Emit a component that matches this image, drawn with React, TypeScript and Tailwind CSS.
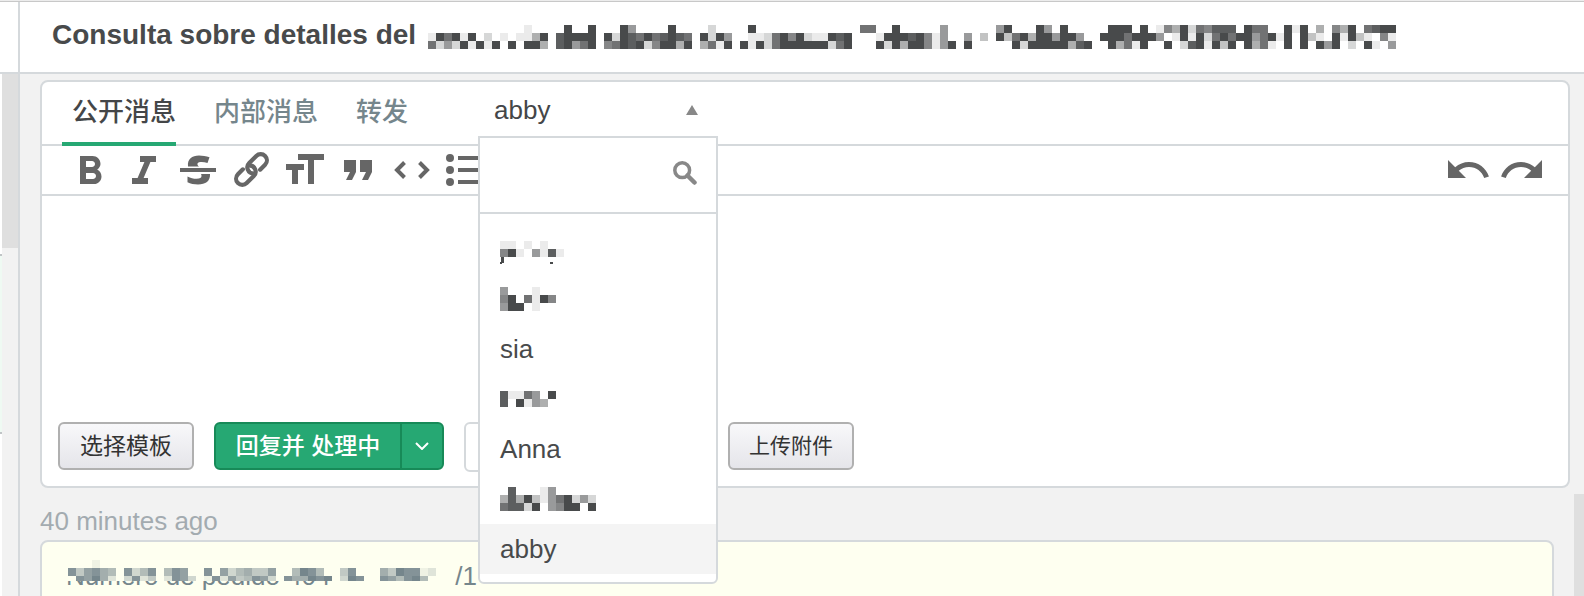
import { useState } from "react"
import type { ReactNode } from "react"
import clsx from "clsx"

// Each digit is the strength of one 8px cell, a dot is an empty cell
const TITLE_MASK = [
  "............1...|.9..9.|..95....9...|.2....|9.............77|..9|.....5......|59...95.9....|.999.9.1|649276888.977.|.919.4.649.7899",
  "197919.2.1.1149.|89999.|92987978987.|9295..|1127969211989...|199|989615..5.3.|93794995995..|99979995|.1919279799579|19.931.91931.61",
  "725291919.9.994.|89579.|67989269949.|4719.9|1927999999279...|929|4996159.9...|..9299999489.|.94719..|9.2891939.9471|.9.9.959.2.91.5",
].map((row) => row.replaceAll("|", ""))

const MESSAGE_MASK = [
  "...1..........................................",
  "847865.8358.587..8.7356447..5985..48...6498812",
  ".87962.3824.2873.182745873.866989.398..875895.",
]

const TABS = ["公开消息", "内部消息", "转发"]

const AGENTS = [
  { id: "a1", mask: ["........", "11.1.1..", "691.5181", "........"], tail: true },
  { id: "a2", mask: ["5...1..", "69.7196", "599.1.."] },
  { id: "sia", name: "sia" },
  { id: "a4", mask: ["81175.9", "8.9154."] },
  { id: "anna", name: "Anna" },
  { id: "a6", mask: [".8...15.....", "484931579252", "78829.5699.9"] },
  { id: "abby", name: "abby" },
]

function Mosaic({ rows, className, height, tail }: { rows: string[]; className?: string; height?: number; tail?: boolean }) {
  const width = rows[0].length * 8
  const h = height ?? rows.length * 8
  return (
    <svg
      aria-hidden="true"
      width={width}
      height={h}
      viewBox={`0 0 ${width} ${h}`}
      shapeRendering="crispEdges"
      fill="currentColor"
      className={clsx("shrink-0", className)}
    >
      {rows.map((row, y) =>
        row.split("").map((cell, x) =>
          Number(cell) > 0 ? (
            <rect key={`${y}-${x}`} x={x * 8} y={y * 8} width={8} height={8} fillOpacity={Number(cell) / 9} />
          ) : null
        )
      )}
      {tail && <path d="M1 24h3v4q0 3-4 3v-2q1 0 1-2zM50 29h3v2h-3z" />}
    </svg>
  )
}

function Icon({ children }: { children: ReactNode }) {
  return (
    <svg width="48" height="48" viewBox="0 0 48 48" fill="currentColor" aria-hidden="true" className="shrink-0">
      {children}
    </svg>
  )
}

const TOOLS = [
  {
    label: "Bold",
    icon: (
      <path
        transform="translate(-1 2) scale(2)"
        d="M15.6 10.79c.97-.67 1.65-1.77 1.65-2.79 0-2.26-1.75-4-4-4H7v14h7.04c2.09 0 3.71-1.7 3.71-3.79 0-1.52-.86-2.82-2.15-3.42zM10 6.5h3c.83 0 1.5.67 1.5 1.5s-.67 1.5-1.5 1.5h-3v-3zm3.5 9H10v-3h3.5c.83 0 1.5.67 1.5 1.5s-.67 1.5-1.5 1.5z"
      />
    ),
  },
  {
    label: "Italic",
    icon: <path transform="translate(0 2) scale(2)" d="M10 4v3h2.21l-3.42 8H6v3h8v-3h-2.21l3.42-8H18V4z" />,
  },
  {
    label: "Strikethrough",
    icon: (
      <>
        <path d="M15 20.5c-.8-7.500 4-11 11-11 3.500 0 7 .7 10.500 1.800L34.500 17c-2.500-.8-5-1.200-7-1-2.500.2-3.500 1.300-3 2.700.2.800.8 1.400 1.500 1.800z" />
        <path d="M28 28h9c.5 7-4.500 10.500-12 10.500-4 0-7.500-.7-10.500-2.200V30.500c3 1.500 6 2.300 9 2.300 3.500 0 5-1 5-2.800 0-.8-.1-1.500-.5-2z" />
        <path d="M7 22h36v4H7z" />
      </>
    ),
  },
  {
    label: "Link",
    icon: (
      <g
        transform="translate(25.5 23.5) rotate(-45)"
        fill="none"
        stroke="currentColor"
        strokeWidth="4.2"
        strokeLinecap="round"
      >
        <path d="M6 6.2H13a6.2 6.2 0 0 0 0-12.4H3a6.2 6.2 0 0 0-4.4 10.6" />
        <path d="M-6-6.2H-13a6.2 6.2 0 0 0 0 12.4H-3a6.2 6.2 0 0 0 4.4-10.6" />
      </g>
    ),
  },
  {
    label: "Text size",
    icon: <path transform="translate(1 0) scale(2)" d="M9 4v3h5v12h3V7h5V4H9zm-6 8h3v7h3v-7h3V9H3v3z" />,
  },
  {
    label: "Quote",
    icon: <path transform="translate(2 0) scale(2)" d="M6 17h3l2-4V7H5v6h3zm8 0h3l2-4V7h-6v6h3z" />,
  },
  {
    label: "Code",
    icon: (
      <path
        d="M19.5 16.5 12 24l7.5 7.5M34.5 16.500 42 24l-7.500 7.500"
        fill="none"
        stroke="currentColor"
        strokeWidth="4"
      />
    ),
  },
  {
    label: "Bulleted list",
    icon: (
      <>
        <circle cx="12" cy="12" r="4" />
        <circle cx="12" cy="24" r="4" />
        <circle cx="12" cy="36" r="4" />
        <path d="M20 10h26v4H20zM20 22h26v4H20zM20 34h26v4H20z" />
      </>
    ),
  },
]

function AgentPicker() {
  const [selected, setSelected] = useState("abby")

  return (
    <div className="relative ml-[70px] w-60">
      <button
        aria-haspopup="listbox"
        aria-expanded="true"
        className="flex h-14 w-full items-center justify-between pr-5 pl-4 text-[26px] leading-8 text-[#444648]"
      >
        abby
        <svg width="12" height="10" viewBox="0 0 12 10" fill="#888" aria-hidden="true">
          <path d="M6 0l6 10H0z" />
        </svg>
      </button>

      {/* Menu */}
      <div className="absolute top-[54px] left-0 z-10 w-full rounded-b-md border-2 border-[#d5d9dc] bg-white pb-2">
        <label className="flex h-[76px] items-center border-b-2 border-[#d5d9dc] pr-[19px] pb-1 pl-4">
          <input aria-label="Search" className="min-w-0 flex-1 text-[26px] outline-none" />
          <svg width="24" height="24" viewBox="0 0 24 24" fill="none" stroke="#888" aria-hidden="true">
            <circle cx="9.2" cy="9.2" r="7.4" strokeWidth="3.5" />
            <path d="M14.5 14.5l7 7" strokeWidth="4.5" strokeLinecap="round" />
          </svg>
        </label>
        <ul role="listbox" aria-label="Agents" className="pt-2.5 text-[#484a4b]">
          {AGENTS.map((agent) => (
            <li
              key={agent.id}
              role="option"
              aria-selected={agent.id === selected}
              onClick={() => setSelected(agent.id)}
              className={clsx(
                "flex h-[50px] items-center px-5 text-[26px] leading-8",
                agent.id === selected && "bg-[#f4f4f4]"
              )}
            >
              {agent.mask ? <Mosaic rows={agent.mask} tail={agent.tail} /> : agent.name}
            </li>
          ))}
        </ul>
      </div>
    </div>
  )
}

function Composer() {
  const [tab, setTab] = useState(TABS[0])

  return (
    <section className="rounded-lg border-2 border-[#d5d9dc] bg-white">
      {/* Tabs */}
      <div className="flex h-16 border-b-2 border-[#d5d9dc] pl-5">
        <div className="flex gap-7">
          {TABS.map((name) => (
            <button
              key={name}
              onClick={() => setTab(name)}
              className={clsx(
                "-mb-0.5 border-b-4 pl-2.5 text-[26px] leading-8 font-medium",
                tab === name ? "border-[#26a873] text-[#444648]" : "border-transparent text-[#75868c]"
              )}
            >
              {name}
            </button>
          ))}
        </div>
        <AgentPicker />
      </div>

      {/* Toolbar */}
      <div className="flex h-[50px] items-center justify-between border-b-2 border-[#d5d9dc] pr-[22px] pl-[25px] text-[#666]">
        <div className="flex gap-[5px]">
          {TOOLS.map((tool) => (
            <button key={tool.label} aria-label={tool.label}>
              <Icon>{tool.icon}</Icon>
            </button>
          ))}
        </div>
        <div className="flex gap-1.5">
          <button aria-label="Undo">
            <Icon>
              <path
                transform="scale(2)"
                d="M12.5 8c-2.65 0-5.05.99-6.9 2.6L2 7v9h9l-3.62-3.62c1.39-1.16 3.16-1.88 5.12-1.88 3.54 0 6.55 2.31 7.6 5.5l2.37-.78C21.08 11.03 17.15 8 12.5 8z"
              />
            </Icon>
          </button>
          <button aria-label="Redo">
            <Icon>
              <path
                transform="scale(2)"
                d="M18.4 10.6C16.55 8.99 14.15 8 11.5 8c-4.65 0-8.58 3.03-9.96 7.22L3.9 16c1.05-3.19 4.05-5.5 7.6-5.5 1.95 0 3.73.72 5.12 1.88L13 16h9V7z"
              />
            </Icon>
          </button>
        </div>
      </div>

      <textarea aria-label="公开消息" className="block h-[226px] w-full resize-none p-5 text-[26px] outline-none" />

      {/* Actions */}
      <div className="flex h-16 items-start px-4">
        <button className="h-12 rounded-md border-2 border-[#b0b0b0] bg-linear-to-b from-[#f8f8fa] to-[#e5e5ea] px-5 text-[23px] text-[#333]">
          选择模板
        </button>
        <div className="ml-5 flex h-12 rounded-md border-2 border-[#178a58] bg-[#26a873] text-white">
          <button className="w-[184px] text-[23px] font-medium">回复并 处理中</button>
          <button aria-label="More" className="flex w-[42px] items-center justify-center border-l-2 border-[#178a58]">
            <svg width="14" height="8" viewBox="0 0 14 8" fill="none" stroke="currentColor" strokeWidth="2" aria-hidden="true">
              <path d="M1 1l6 6 6-6" />
            </svg>
          </button>
        </div>
        <button aria-label="Status" className="ml-5 h-[50px] w-60 rounded-md border-2 border-[#d5d9dc] bg-white" />
        <button className="ml-6 h-12 rounded-md border-2 border-[#b0b0b0] bg-linear-to-b from-[#f8f8fa] to-[#e5e5ea] px-[19px] text-[21px] text-[#333]">
          上传附件
        </button>
      </div>
    </section>
  )
}

export default function App() {
  return (
    <div className="flex h-screen flex-col overflow-hidden border-t border-[#ececec] bg-[#f2f2f2] font-['Liberation_Sans','Noto_Sans_CJK_SC',sans-serif]">
      {/* Header */}
      <header className="flex h-[73px] shrink-0 border-y border-t-[#c8c8c8] border-b-2 border-b-[#d5d9dc] bg-white">
        <div className="w-5 shrink-0 border-r-2 border-[#d5d9dc]" />
        <div className="flex min-w-0 flex-1 items-center pl-8 text-[#484a4b]">
          <h1 className="shrink-0 pb-1 text-[28px] leading-8 font-bold">Consulta sobre detalles del</h1>
          <Mosaic rows={TITLE_MASK} className="ml-3" />
        </div>
      </header>

      <div className="flex min-h-0 flex-1">
        {/* Left pane edge */}
        <aside className="flex w-5 shrink-0 border-r-2 border-[#d5d9dc]">
          <div className="flex w-0.5 flex-col bg-white">
            <div className="mt-[180px] h-[180px] border-y-2 border-[#c0c4c6] bg-[#effaf3]" />
          </div>
          <div className="h-[174px] flex-1 bg-[#dfdfdf]" />
        </aside>

        <main className="min-w-0 flex-1 pt-1.5 pr-1 pl-5">
          <Composer />
          <p className="pt-[17px] pb-[3px] text-[26px] leading-8 text-[#a3abb0]">40 minutes ago</p>
          <article className="mr-4 h-40 rounded-lg border-2 border-[#d5d9dc] bg-[#fefff0] px-6 pt-[18px] text-[26px] leading-8 text-[#75868c]">
            <div className="relative flex gap-[116px]">
              <span>Número de pedido 404-</span>
              <span>/1</span>
              <div className="absolute top-0 left-0 bg-[#fefff0] pl-0.5">
                <Mosaic rows={MESSAGE_MASK} height={21} />
              </div>
            </div>
          </article>
        </main>

        {/* Page scrollbar */}
        <div className="flex w-2.5 shrink-0 flex-col">
          <div className="mt-[420px] flex-1 bg-[#dfdfdf]" />
        </div>
      </div>
    </div>
  )
}
